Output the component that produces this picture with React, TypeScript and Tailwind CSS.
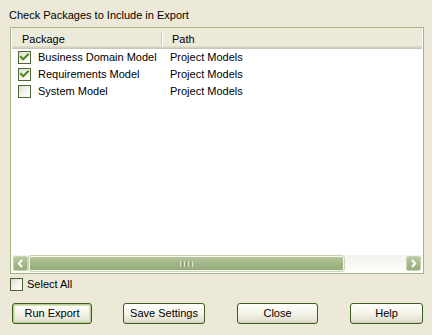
import React from "react";

function Check({ checked }: { checked: boolean }) {
  return (
    <div className="w-[13px] h-[13px] border border-[#4d6633] bg-gradient-to-br from-[#dcdbd3] via-[#f3f2ee] to-white relative shrink-0">
      {checked && (
        <svg width="11" height="11" viewBox="0 0 11 11" className="absolute left-0 top-0">
          <path d="M2 5 L4.2 7.3 L9 2.5" stroke="#4f8a1f" strokeWidth="2" fill="none" strokeLinecap="square" />
        </svg>
      )}
    </div>
  );
}

function Btn({ label, w, isDefault }: { label: string; w: string; isDefault?: boolean }) {
  return (
    <div
      className={`${w} h-[21px] border border-[#3d5d1f] rounded-[3px] bg-gradient-to-b from-[#fffffa] via-[#f4f3ea] to-[#dedbc9] flex items-center justify-center text-[11px] leading-[13px] text-black ${
        isDefault ? "shadow-[inset_0_0_0_1px_#b7cf93,inset_0_0_0_2px_#d6e4bd]" : "shadow-[inset_0_-1px_0_#d3d0bd]"
      }`}
    >
      {label}
    </div>
  );
}

export default function App() {
  const rows = [
    { name: "Business Domain Model", path: "Project Models", checked: true },
    { name: "Requirements Model", path: "Project Models", checked: true },
    { name: "System Model", path: "Project Models", checked: false },
  ];
  return (
    <div
      className="w-[432px] h-[335px] bg-[#ece9d8] flex flex-col text-[11px] text-black overflow-hidden"
      style={{ fontFamily: '"Liberation Sans", Arial, sans-serif' }}
    >
      <div className="pl-[9px] pt-[9px] leading-[13px]">Check Packages to Include in Export</div>
      <div className="mt-[5px] ml-[10px] w-[414px] h-[247px] border border-[#a2b683] bg-white flex flex-col px-[1px] pb-[1px]">
        <div className="h-[21px] flex flex-col shrink-0">
          <div className="h-[18px] bg-[#ebeadb] flex">
            <div className="w-[149px] pl-[10px] pt-[5px] leading-[13px]">Package</div>
            <div className="flex pt-[4px] pb-[1px]">
              <div className="w-[1px] bg-[#cbc7b8]" />
              <div className="w-[1px] bg-white" />
            </div>
            <div className="flex-1 pl-[9px] pt-[5px] leading-[13px]">Path</div>
          </div>
          <div className="h-[1px] bg-[#e2decd]" />
          <div className="h-[1px] bg-[#d6d2c2]" />
          <div className="h-[1px] bg-[#cbc7b8]" />
        </div>
        <div className="flex-1 flex flex-col">
          {rows.map((r) => (
            <div key={r.name} className="h-[17px] flex items-start">
              <div className="w-[158px] flex items-start pl-[6px] pt-[2px]">
                <Check checked={r.checked} />
                <div className="ml-[7px] leading-[13px]">{r.name}</div>
              </div>
              <div className="pt-[2px] leading-[13px]">{r.path}</div>
            </div>
          ))}
        </div>
        <div className="h-[17px] flex px-[1px] py-[1px] bg-gradient-to-b from-[#f3f2ec] to-[#fefefb] shrink-0">
          <div className="w-[15px] h-[15px] rounded-[2px] border border-[#c9d5b4] bg-gradient-to-b from-[#b9c9a2] to-[#96ac7a] flex items-center justify-center">
            <svg width="7" height="9" viewBox="0 0 7 9">
              <path d="M5 1 L1.8 4.5 L5 8" stroke="white" strokeWidth="2" fill="none" />
            </svg>
          </div>
          <div className="flex-1 flex">
            <div className="ml-[1px] w-[315px] h-[15px] rounded-[2px] border border-[#f5f7ef] bg-gradient-to-b from-[#b4c59e] via-[#a2b787] to-[#95ab7a] shadow-[0_0_0_0.5px_#9aaf80] flex items-center justify-center gap-[1px]">
              <div className="w-[1px] h-[6px] bg-[#dfe7d2]" />
              <div className="w-[1px] h-[6px] bg-[#8ca270]" />
              <div className="w-[1px] h-[6px] bg-[#dfe7d2]" />
              <div className="w-[1px] h-[6px] bg-[#8ca270]" />
              <div className="w-[1px] h-[6px] bg-[#dfe7d2]" />
              <div className="w-[1px] h-[6px] bg-[#8ca270]" />
              <div className="w-[1px] h-[6px] bg-[#dfe7d2]" />
            </div>
          </div>
          <div className="w-[15px] h-[15px] rounded-[2px] border border-[#c9d5b4] bg-gradient-to-b from-[#b9c9a2] to-[#96ac7a] flex items-center justify-center">
            <svg width="7" height="9" viewBox="0 0 7 9">
              <path d="M2 1 L5.2 4.5 L2 8" stroke="white" strokeWidth="2" fill="none" />
            </svg>
          </div>
        </div>
      </div>
      <div className="mt-[4px] ml-[10px] flex items-center">
        <Check checked={false} />
        <div className="ml-[4px] leading-[13px]">Select All</div>
      </div>
      <div className="mt-[12px] ml-[12px] flex">
        <Btn label="Run Export" w="w-[80px]" isDefault />
        <div className="w-[31px]" />
        <Btn label="Save Settings" w="w-[82px]" />
        <div className="w-[32px]" />
        <Btn label="Close" w="w-[81px]" />
        <div className="w-[32px]" />
        <Btn label="Help" w="w-[73px]" />
      </div>
    </div>
  );
}
